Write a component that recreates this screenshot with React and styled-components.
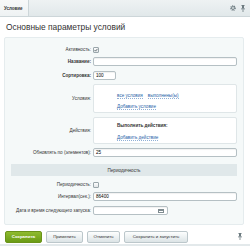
import React from 'react'
import styled, { createGlobalStyle } from 'styled-components'

const Global = createGlobalStyle`
  html, body { margin: 0; padding: 0; background: #fff; }
  body { font-family: "Liberation Sans", Arial, sans-serif; color: #000; }
  * { box-sizing: border-box; }
`;

const Page = styled.div`
  width: 250px;
  height: 250px;
  overflow: hidden;
  background: #fff;
`;

const TabBar = styled.div`
  height: 17px;
  display: flex;
  align-items: stretch;
  background: linear-gradient(#eef2f3, #e1e8ea);
  border-bottom: 1px solid #cdd6d9;
`;

const Tab = styled.div`
  width: 29px;
  display: flex;
  align-items: center;
  padding-left: 4px;
  font-size: 4.5px;
  font-weight: bold;
  color: #333;
  background: linear-gradient(#f8f9f9, #eef2f3);
  border-right: 1px solid #cdd6d9;
`;

const TabTools = styled.div`
  margin-left: auto;
  display: flex;
  align-items: center;
  gap: 5px;
  padding-right: 5px;
  color: #6d7b80;
`;

const Title = styled.h1`
  margin: 0;
  padding: 5px 0 0 6px;
  height: 19px;
  font-size: 8.4px;
  font-weight: normal;
  color: #333;
`;

const Panel = styled.div`
  margin: 1px 6px 0 4px;
  padding: 4px 6px 9px 6px;
  background: #f5f9f9;
  border: 1px solid #e5ecee;
  border-radius: 2px;
`;

const Row = styled.div`
  display: grid;
  grid-template-columns: 80px 1fr;
  column-gap: 2px;
  align-items: center;
  margin-top: ${p => p.$top || 0}px;
  min-height: ${p => p.$h || 9}px;
`;

const Label = styled.div`
  text-align: right;
  font-size: 4.6px;
  color: #333;
  font-weight: ${p => (p.$bold ? 'bold' : 'normal')};
  white-space: nowrap;
`;

const Input = styled.div`
  height: ${p => p.$h || 9}px;
  width: ${p => (p.$w ? p.$w + 'px' : '100%')};
  background: #fff;
  border: 1px solid #b5c0c4;
  border-radius: 2px;
  box-shadow: inset 0 1px 1px rgba(0, 0, 0, 0.06);
  display: flex;
  align-items: center;
  padding: 0 2px;
  font-size: 4.6px;
  color: #000;
  position: relative;
`;

const Check = styled.div`
  width: 6px;
  height: 6px;
  border: 1px solid #9aa6ab;
  border-radius: 1px;
  background: linear-gradient(#fdfdfd, #e2e6e8);
  display: flex;
  align-items: center;
  justify-content: center;
`;

const Box = styled.div`
  height: ${p => p.$h}px;
  background: #fff;
  border: 1px solid #dfe6e8;
  border-radius: 2px;
  padding: ${p => p.$pt}px 0 0 23px;
  display: flex;
  flex-direction: column;
  gap: ${p => p.$gap}px;
`;

const Line = styled.div`
  display: flex;
  gap: 5px;
  font-size: 4.6px;
  color: #333;
  font-weight: ${p => (p.$bold ? 'bold' : 'normal')};
`;

const Link = styled.span`
  color: #2a64a8;
  border-bottom: 1px dotted #8fb0d6;
  line-height: 5px;
`;

const Heading = styled.div`
  margin-top: 7px;
  height: 12px;
  background: #e0e8ea;
  display: flex;
  align-items: center;
  justify-content: center;
  font-size: 4.6px;
  color: #333;
`;

const Footer = styled.div`
  display: flex;
  align-items: center;
  gap: 4px;
  padding: 4px 0 0 5px;
  height: 21px;
  border-bottom: 2px solid #e3e9eb;
`;

const Button = styled.div`
  height: 12px;
  width: ${p => p.$w}px;
  display: flex;
  align-items: center;
  justify-content: center;
  font-size: 4.4px;
  border-radius: 2px;
  ${p =>
    p.$green
      ? `background: linear-gradient(#8fbb2f, #6a9b15);
         color: #fff; font-weight: bold; border: 1px solid #6a9319;`
      : `background: linear-gradient(#fdfefe, #dce4e6);
         color: #333; border: 1px solid #bcc7cb;`}
`;

const PinSlot = styled.div`
  margin-left: auto;
  padding-right: 8px;
  display: flex;
  align-items: center;
`;

const Gear = () => (
  <svg width="6" height="6" viewBox="0 0 10 10">
    <circle cx="5" cy="5" r="3.6" fill="none" stroke="#6d7b80" strokeWidth="2.2" strokeDasharray="1.6 1.2" />
    <circle cx="5" cy="5" r="2.4" fill="none" stroke="#6d7b80" strokeWidth="1.4" />
  </svg>
);

const Pin = () => (
  <svg width="4" height="7" viewBox="0 0 4 7">
    <rect x="0.5" y="0" width="3" height="1" fill="#6d7b80" />
    <rect x="1" y="1" width="2" height="2.5" fill="#6d7b80" />
    <rect x="0" y="3.5" width="4" height="0.8" fill="#6d7b80" />
    <rect x="1.6" y="4.3" width="0.8" height="2.7" fill="#6d7b80" />
  </svg>
);

const Tick = () => (
  <svg width="4" height="4" viewBox="0 0 4 4">
    <path d="M0.5 2 L1.6 3.1 L3.5 0.8" fill="none" stroke="#4d5a5f" strokeWidth="0.8" />
  </svg>
);

const Calendar = styled.div`
  position: absolute;
  right: 3px;
  top: 2px;
  width: 6px;
  height: 4px;
  border: 1px solid #7f8c91;
  border-top-width: 2px;
`;

export default function App() {
  return (
    <Page>
      <Global />
      <TabBar>
        <Tab>Условие</Tab>
        <TabTools>
          <Gear />
          <Pin />
        </TabTools>
      </TabBar>
      <Title>Основные параметры условий</Title>
      <Panel>
        <Row $top={3}>
          <Label>Активность:</Label>
          <Check><Tick /></Check>
        </Row>
        <Row $top={3}>
          <Label $bold>Название:</Label>
          <Input />
        </Row>
        <Row $top={5}>
          <Label $bold>Сортировка:</Label>
          <Input $w={23}>100</Input>
        </Row>
        <Row $top={4}>
          <Label>Условия:</Label>
          <Box $h={29} $pt={8} $gap={5}>
            <Line>
              <Link>все условия</Link>
              <Link>выполнены(ы)</Link>
            </Line>
            <Line>
              <Link>Добавить условие</Link>
            </Line>
          </Box>
        </Row>
        <Row $top={4}>
          <Label>Действия:</Label>
          <Box $h={27} $pt={5} $gap={7}>
            <Line $bold>Выполнить действия:</Line>
            <Line>
              <Link>Добавить действие</Link>
            </Line>
          </Box>
        </Row>
        <Row $top={4}>
          <Label>Обновлять по (элементов):</Label>
          <Input>25</Input>
        </Row>
        <Heading>Периодичность</Heading>
        <Row $top={4}>
          <Label>Периодичность:</Label>
          <Check />
        </Row>
        <Row $top={3}>
          <Label>Интервал(сек.):</Label>
          <Input>86400</Input>
        </Row>
        <Row $top={5}>
          <Label>Дата и время следующего запуска:</Label>
          <Input $w={75}>
            <Calendar />
          </Input>
        </Row>
      </Panel>
      <Footer>
        <Button $green $w={37}>Сохранить</Button>
        <Button $w={37}>Применить</Button>
        <Button $w={33}>Отменить</Button>
        <Button $w={64}>Сохранить и запустить</Button>
        <PinSlot>
          <Pin />
        </PinSlot>
      </Footer>
    </Page>
  );
}
